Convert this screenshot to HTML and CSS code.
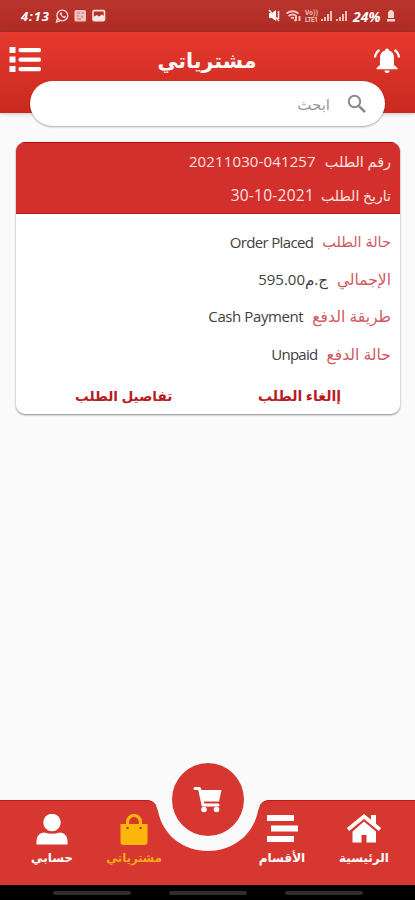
FILE: index.html
```html
<!DOCTYPE html>
<html lang="ar" dir="rtl">
<head>
<meta charset="utf-8">
<title>مشترياتي</title>
<link rel="stylesheet" href="styles.css">
</head>
<body>
<div class="app">
  <div class="status" dir="ltr">
    <span class="clock">4:13</span>
    <svg class="status-left" width="52" height="16" viewBox="0 0 52 16">
      <g fill="none" stroke="#f8d5d1" stroke-width="1.4"><circle cx="7.3" cy="7.5" r="5.4"/><path d="M2.5 10.5L1.5 14l3.6-1.2"/></g>
      <path d="M5 4.7c-1 1.4 2.8 6 5.2 5.4l.8-1.3-2-1-.8.7-1.6-1.9.6-.9-.9-1.5z" fill="#f8d5d1"/>
      <rect x="19.5" y="2" width="11.5" height="11.5" rx="1.5" fill="#f0c3be"/>
      <path d="M22 5h3m1.500 0h2.500M22 8h2m2 0l2 1.500M22 11h4" stroke="#d98580" stroke-width="1.3"/>
      <rect x="38" y="2.6" width="11.5" height="10" rx="1" fill="none" stroke="#fbe3e0" stroke-width="1.6"/>
      <path d="M38 12V9l4-2 2 1.500 3-2 2.500 2V12z" fill="#fbe3e0"/>
    </svg>
    <span class="grow"></span>
    <svg class="status-right" width="84" height="16" viewBox="0 0 84 16">
      <path d="M1 5h3l4-3v11L4 10H1z" fill="#fff"/>
      <path d="M1 2l10 11M10.500 3v8" stroke="#fbe3e0" stroke-width="1.6"/>
      <g fill="none" stroke="#f2c5c0" stroke-width="1.9"><path d="M18.500 5.500q6-4.500 12 0M20.500 8q4-3 8 0M23 10.200q1.500-1 3 0"/><path d="M28 8v5m-1.500-1.500L28 13m3.500-5v5"/></g>
      <g class="volte"><text x="37" y="7" textLength="13">Vo))</text><text x="37" y="14" textLength="13">LTE1</text></g>
      <path d="M54 13v-2m3 2V9m3 4V6m3 7V3M69 13v-2m3 2V9m3 4V6m3 7V3" stroke="#f2c5c0" stroke-width="1.9"/>
    </svg>
    <span class="battery">24%</span>
    <svg width="10" height="14" viewBox="0 0 10 14"><path d="M3.500 1h3v1.500H8V9H2V2.500h1.500zM1 10h8v2.500H1z" fill="#f8d5d1"/></svg>
  </div>

  <header class="header">
    <div class="bar">
      <svg class="bell" width="28" height="28" viewBox="0 0 28 28">
        <path d="M14 2.500a2 2 0 0 0-2 2c-3.200.9-5 3.700-5 7V19l-3.500 3v1.300h21V22L21 19v-7.500c0-3.300-1.800-6.100-5-7a2 2 0 0 0-2-2zM11.500 24.500a2.500 2.500 0 0 0 5 0z" fill="#fff"/>
        <path d="M6.500 4Q2.500 6.500 2 11.500M21.500 4Q25.500 6.500 26 11.500" fill="none" stroke="#fff" stroke-width="2.2"/>
      </svg>
      <h1 class="title">مشترياتي</h1>
      <svg class="list" width="32" height="28" viewBox="0 0 32 28">
        <path d="M.5 1h6v6h-6zm0 9.500h6v6h-6zm0 9.500h6v6h-6z" fill="#fff"/>
        <path d="M11.500 4.200h18.500M11.500 13.700h18.500M11.500 23.200h18.500" stroke="#fff" stroke-width="4.2" stroke-linecap="round"/>
      </svg>
    </div>
    <div class="search">
      <svg width="20" height="20" viewBox="0 0 20 20" fill="none" stroke="#8a8a8a"><circle cx="7.500" cy="7.500" r="5.700" stroke-width="2"/><path d="M11.800 11.800L18 18" stroke-width="2.5"/></svg>
      <span class="placeholder">ابحث</span>
    </div>
  </header>

  <main class="main">
    <article class="order">
      <div class="order-head">
        <div class="row"><span class="k number-label">رقم الطلب</span><span class="v number" dir="ltr">20211030-041257</span></div>
        <div class="row"><span class="k date-label">تاريخ الطلب</span><span class="v date" dir="ltr">30-10-2021</span></div>
      </div>
      <div class="order-body">
        <div class="row"><span class="k">حالة الطلب</span><span class="v state">Order Placed</span></div>
        <div class="row"><span class="k total-label">الإجمالي</span><span class="v">ج.م595.00</span></div>
        <div class="row"><span class="k method-label">طريقة الدفع</span><span class="v method">Cash Payment</span></div>
        <div class="row"><span class="k method-label">حالة الدفع</span><span class="v paid">Unpaid</span></div>
      </div>
      <div class="actions"><span class="cancel">إالغاء الطلب</span><span class="details">تفاصيل الطلب</span></div>
    </article>
  </main>

  <nav class="nav">
    <svg class="nav-bg" width="415" height="85" viewBox="0 0 415 85"><path d="M0 0H145C153 0 156 4 158 11C163 36 184 51 208 51C232 51 253 36 258 11C260 4 263 0 271 0H415V85H0Z" fill="#d63831"/><path d="M0 .5H145C151 .5 154 2 156 6M260 6C262 2 265 .5 271 .5H415" fill="none" stroke="#bd1815"/></svg>
    <div class="item home">
      <svg width="36" height="34" viewBox="0 0 36 34" fill="#fff"><path d="M18 7.500L6.500 17.500V28.500H15.500V21H20.500V28.500H30V17.500z"/><path d="M2 16.500L18 3L34 16.500" fill="none" stroke="#d63831" stroke-width="6"/><path d="M2 15.500L18 2.500L34 15.500" fill="none" stroke="#fff" stroke-width="3.8"/><path d="M25 1h5V12L25 8z"/></svg>
      <span>الرئيسية</span>
    </div>
    <div class="item sections">
      <svg width="36" height="34" viewBox="0 0 36 34" fill="#fff"><path d="M3 1h27V7H3zM7 11.500h27v6H7zM3 22h27v6H3z"/></svg>
      <span>الأقسام</span>
    </div>
    <div class="gap"></div>
    <div class="item orders">
      <svg width="36" height="34" viewBox="0 0 36 34"><path d="M4.500 10h27v18a3 3 0 0 1-3 3h-21a3 3 0 0 1-3-3z" fill="#fbb50b"/><path d="M11.500 14V8a6.500 6.500 0 0 1 13 0v6" fill="none" stroke="#fbb50b" stroke-width="3.2"/><circle cx="11.500" cy="14" r="1.3" fill="#a65520"/><circle cx="24.500" cy="14" r="1.3" fill="#a65520"/></svg>
      <span>مشترياتي</span>
    </div>
    <div class="item account">
      <svg width="36" height="34" viewBox="0 0 36 34" fill="#fff"><circle cx="18" cy="8.500" r="8.700"/><path d="M2.500 30.500v-4a8 8 0 0 1 8-8q7.500 2.500 15 0a8 8 0 0 1 8 8v4z"/></svg>
      <span>حسابي</span>
    </div>
    <div class="cart">
      <svg width="30" height="28" viewBox="0 0 30 28"><path d="M2 2.500H6.500L10 19H25" fill="none" stroke="#fff" stroke-width="3" stroke-linejoin="round" stroke-linecap="round"/><path d="M7 4H28.500L26 15.500H9.500z" fill="#fff"/><circle cx="11" cy="23.500" r="2.800" fill="#fff"/><circle cx="23.500" cy="23.500" r="2.800" fill="#fff"/></svg>
    </div>
  </nav>
  <div class="system"><i></i><i></i><i></i></div>
</div>
</body>
</html>
```
FILE: styles.css
```css
* { box-sizing: border-box; }
body { margin: 0; background: #fafafa; font-family: "Open Sans", "DejaVu Sans", sans-serif; }
.app { width: 415px; height: 900px; display: flex; flex-direction: column; overflow: hidden; }
svg { display: block; flex: none; }
.status { height: 32px; flex: none; display: flex; align-items: center; padding: 0 19px 0 21px; background: linear-gradient(#ba342d, #ae2c25); color: #fff; font: italic 700 13px "Open Sans", sans-serif; }
.clock { width: 34px; letter-spacing: .9px; }
.grow { flex: 1; }
.status-right { margin-right: 1px; }
.battery { width: 33px; font-size: 14px; }
.volte { fill: #f0c3be; font: 700 6.5px Roboto, sans-serif; }
.header { height: 81px; flex: none; background: linear-gradient(#e6392e, #ca291f); box-shadow: 0 1px 4px #0003; }
.bar { height: 49px; display: flex; align-items: center; justify-content: space-between; padding: 7px 14px 0 9px; }
.title { margin: 0; color: #fff; font-size: 20.6px; line-height: 32px; font-weight: 700; }
.search { width: 355px; height: 45px; margin: 0 30px; display: flex; align-items: center; gap: 17px; padding: 0 18px; border-radius: 23px; background: #fff; box-shadow: 0 1px 2px #0005; }
.placeholder { font-size: 15px; color: #9a9a9a; }
.main { flex: 1; padding: 29px 15px 0 16px; }
.order { height: 272px; border-radius: 9px; background: #fff; overflow: hidden; box-shadow: 0 1px 2px #0007; }
.order-head { height: 72px; padding: 1px 9px 0; background: #d32f2d; border-top: 1px solid #b90d10; border-bottom: 1px solid #b91a1a; color: #fde3e0; }
.order-head .row { height: 34px; }
.row { display: flex; align-items: center; gap: 9px; font-size: 15px; white-space: nowrap; }
.number-label { font-size: 14.4px; }
.number { letter-spacing: .13px; }
.date-label { font-size: 14.1px; }
.date { font-size: 15.5px; letter-spacing: .25px; margin-right: -2px; }
.order-body { padding: 9px 9px 0; }
.order-body .row { height: 37.3px; }
.order-body .k { color: #cf5a61; font-size: 14.5px; }
.order-body .total-label { font-size: 15.5px; }
.order-body .method-label { font-size: 15.6px; }
.order-body .v { color: #3e3e3e; }
.order-body .state { letter-spacing: -.65px; }
.order-body .method { letter-spacing: -.4px; }
.order-body .paid { letter-spacing: -.75px; }
.actions { display: flex; padding: 0 59px; justify-content: space-between; font-size: 14px; line-height: 20px; font-weight: 700; color: #b71c1f; margin-top: 14px; }
.details { font-size: 13.6px; }
.nav { position: relative; height: 85px; flex: none; display: flex; }
.nav-bg { position: absolute; left: 0; top: 0; }
.item { position: relative; width: 82px; display: flex; flex-direction: column; align-items: center; justify-content: flex-end; padding-bottom: 17px; color: #fff; font-size: 12px; line-height: 20px; font-weight: 700; white-space: nowrap; }
.home { margin-right: 10px; }
.gap { width: 66px; }
.orders { color: #f9aa1c; font-size: 11.6px; }
.cart { position: absolute; left: 172px; top: -37px; width: 72px; height: 73px; border-radius: 50%; background: #d63831; display: flex; align-items: center; justify-content: center; }
.system { height: 15px; flex: none; background: #000; display: flex; justify-content: center; gap: 38px; padding-top: 6px; }
.system i { width: 78px; height: 4px; border-radius: 2px; background: #2e2e2e; }
```
